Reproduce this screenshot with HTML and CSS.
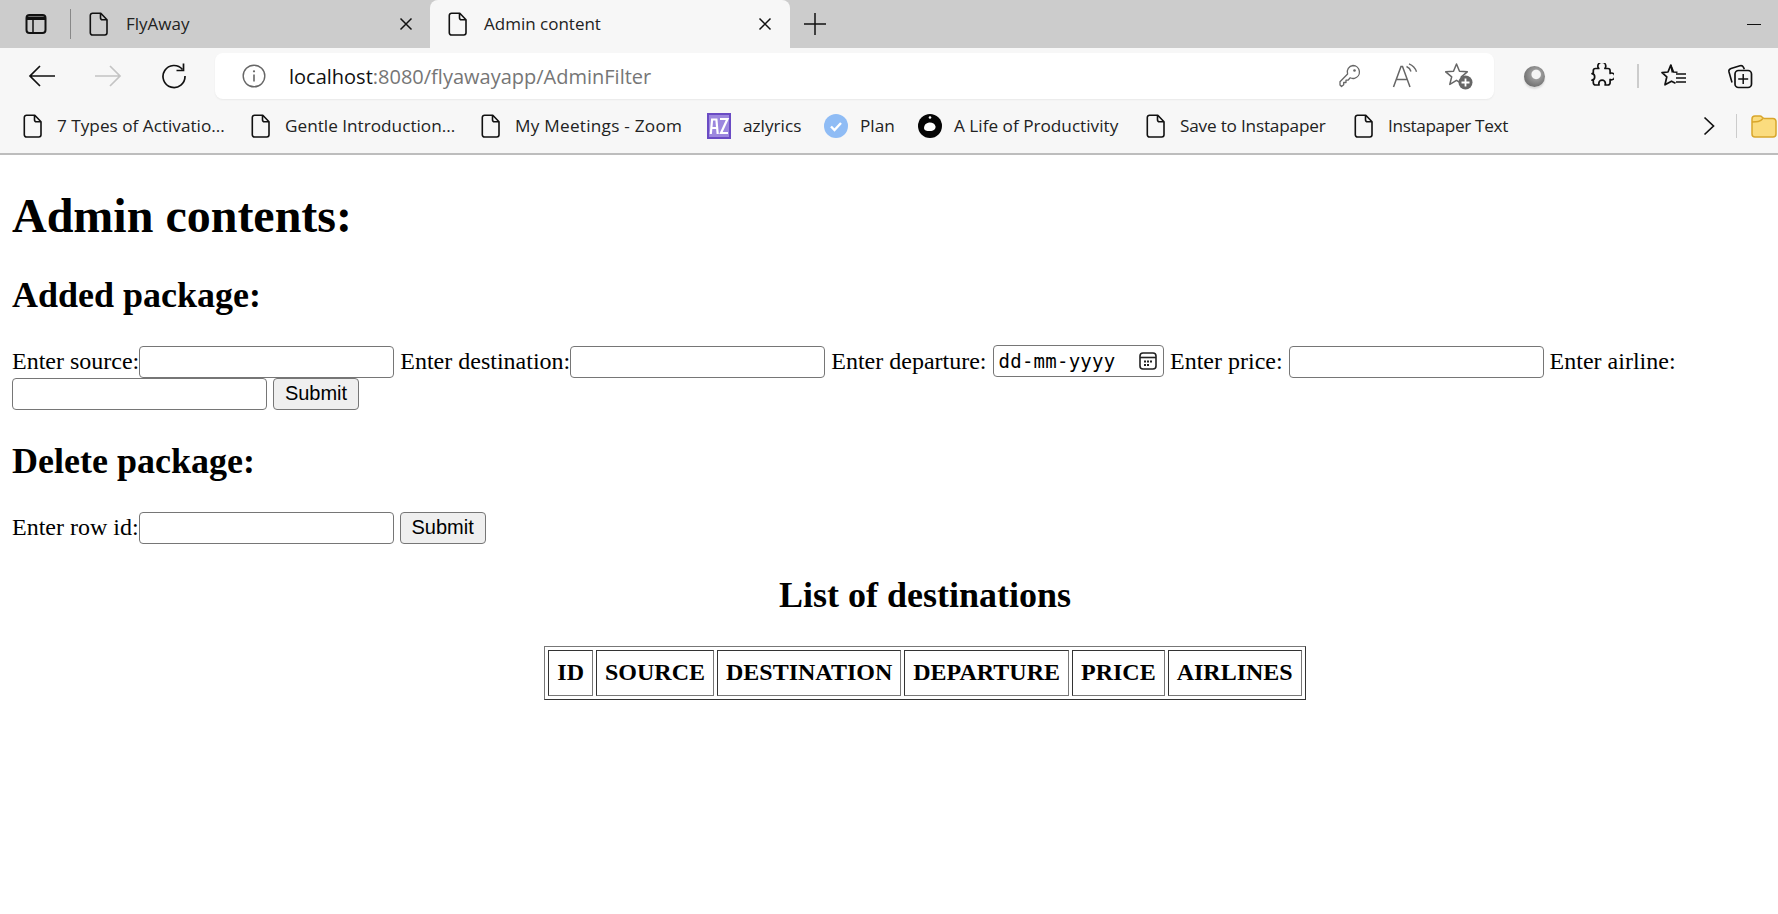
FILE: index.html
```html
<!DOCTYPE html>
<html lang="en">
<head>
<meta charset="utf-8">
<title>Admin content</title>
<link rel="stylesheet" href="styles.css">
</head>
<body>
<svg width="0" height="0" class="defs">
  <symbol id="doc" viewBox="0 0 20 24"><path d="M3.500 1.200h8.300l6.200 6.600v13a2.200 2.200 0 0 1-2.200 2.200H3.500a2.200 2.200 0 0 1-2.200-2.200V3.400a2.200 2.200 0 0 1 2.200-2.200zM11.500 1.500v4.300a2 2 0 0 0 2 2h4.300" fill="none" stroke="#111" stroke-width="1.600" stroke-linejoin="round"/></symbol>
</svg>
<header class="chrome">
  <div class="tabstrip">
    <span class="tool-sidebar"><svg width="22" height="22" viewBox="0 0 22 22"><rect x="1.500" y="2" width="19" height="18" rx="3" fill="none" stroke="#111" stroke-width="2"/><path d="M2 3.500h18v3.500H2z" fill="#111"/><path d="M8 7v12" stroke="#111" stroke-width="1.500"/></svg></span>
    <span class="tab-sep"></span>
    <div class="tab tab-bg">
      <svg class="doc" width="20" height="24"><use href="#doc"/></svg>
      <span class="tab-title">FlyAway</span>
      <svg class="close" width="14" height="14" viewBox="0 0 14 14"><path d="M1.500 1.500l11 11M12.500 1.500l-11 11" stroke="#111" stroke-width="1.500"/></svg>
    </div>
    <div class="tab tab-active">
      <svg class="doc" width="20" height="24"><use href="#doc"/></svg>
      <span class="tab-title">Admin content</span>
      <svg class="close" width="14" height="14" viewBox="0 0 14 14"><path d="M1.500 1.500l11 11M12.500 1.500l-11 11" stroke="#111" stroke-width="1.500"/></svg>
    </div>
    <svg class="newtab" width="22" height="22" viewBox="0 0 22 22"><path d="M11 0v22M0 11h22" stroke="#111" stroke-width="1.500"/></svg>
    <span class="minimize"></span>
  </div>
  <div class="toolbar">
    <svg class="nav nav-back" width="28" height="24" viewBox="0 0 28 24"><path d="M27 12H2M12 2L2 12l10 10" fill="none" stroke="#111" stroke-width="1.700"/></svg>
    <svg class="nav nav-fwd" width="28" height="24" viewBox="0 0 28 24"><path d="M1 12h25M16 2l10 10-10 10" fill="none" stroke="#c4c4c4" stroke-width="1.700"/></svg>
    <svg class="nav nav-reload" width="26" height="26" viewBox="0 0 26 26"><path d="M21.500 6.500A11 11 0 1 0 24 13" fill="none" stroke="#111" stroke-width="1.700"/><path d="M22.500 0.500v7h-7" fill="none" stroke="#111" stroke-width="1.700"/></svg>
    <div class="address">
      <svg class="info" width="24" height="24" viewBox="0 0 24 24"><circle cx="12" cy="12" r="10.800" fill="none" stroke="#666" stroke-width="1.400"/><path d="M12 10.500v7" stroke="#666" stroke-width="1.600"/><circle cx="12" cy="7.300" r="1.100" fill="#666"/></svg>
      <span class="url"><span class="url-host">localhost</span>:8080/flyawayapp/AdminFilter</span>
      <svg class="addr-ico addr-key" width="22" height="24" viewBox="0 0 22 24"><path d="M14 1.500a6.500 6.500 0 0 1 1.500 12.800c-1.600.4-3 .2-4.300-.5L9 16.200H7v2.300H4.700v2.200L2.500 22.500 1 21v-3.300l7.600-7.700A6.500 6.500 0 0 1 14 1.500z" fill="none" stroke="#666" stroke-width="1.300" stroke-linejoin="round"/><circle cx="15.500" cy="6.500" r="1.300" fill="#666"/></svg>
      <svg class="addr-ico addr-read" width="26" height="26" viewBox="0 0 26 26"><path d="M1.500 24L9 3.500h1.500L18 24M4.500 16.500h10.500" fill="none" stroke="#666" stroke-width="1.500"/><path d="M14.500 3.500a8 8 0 0 1 4.500 5M17 0.800a12.500 12.500 0 0 1 7.500 8" fill="none" stroke="#666" stroke-width="1.400"/></svg>
      <svg class="addr-ico addr-star" width="28" height="28" viewBox="0 0 28 28"><path d="M11.500 2l3 7.200 7.800.6-6 5 1.900 7.600-6.700-4.100-6.700 4.100 1.900-7.600-6-5 7.800-.6z" fill="none" stroke="#666" stroke-width="1.500" stroke-linejoin="round"/><circle cx="20.500" cy="20.500" r="7" fill="#666"/><path d="M20.500 16.500v8M16.500 20.500h8" stroke="#fff" stroke-width="1.800"/></svg>
    </div>
    <span class="ball"></span>
    <svg class="tool tool-ext" width="24" height="26" viewBox="0 0 24 26"><path d="M8.800 5.500C8 4.600 7.800 3.900 7.800 3.200a4 4 0 0 1 8 0c0 .7-.3 1.400-.9 2.300h3a2.200 2.200 0 0 1 2.200 2.200v2.700c.6-.3 1-.4 1.400-.4a3.400 3.400 0 0 1 0 6.800c-.4 0-.8-.1-1.400-.4v3.400a2.200 2.200 0 0 1-2.200 2.200h-2.800c.2-.6.300-1.100.3-1.500a3.300 3.300 0 0 0-6.600 0c0 .4.100.9.300 1.500H5.500a2.200 2.200 0 0 1-2.200-2.200v-3c-.5.300-1 .4-1.300.4H2c1.700-.3 2.700-1.600 2.700-3.200S3.700 11 2 10.700h0c.3 0 .8.100 1.300.4V7.700a2.200 2.200 0 0 1 2.200-2.200z" fill="none" stroke="#111" stroke-width="1.700" stroke-linejoin="round"/></svg>
    <span class="tool-sep"></span>
    <svg class="tool tool-fav" width="26" height="26" viewBox="0 0 26 26"><path d="M11.500 9.500L9.800 2 7 9 1 9.600l4.800 4.200-1.800 8 6.500-3.600 4 2" fill="none" stroke="#111" stroke-width="1.700" stroke-linejoin="round"/><path d="M9.800 2l2.800 7 3.900.3M15 11h10M15 15h10M15 19h10" fill="none" stroke="#111" stroke-width="1.500"/></svg>
    <svg class="tool tool-coll" width="26" height="26" viewBox="0 0 26 26"><path d="M5 19.500l-3-10.500a3 3 0 0 1 2-3.600l9-2.600a3 3 0 0 1 3.500 1.500l.8 2" fill="none" stroke="#111" stroke-width="1.600"/><rect x="8" y="7.500" width="16.500" height="17" rx="3.500" fill="#f7f7f7" stroke="#111" stroke-width="1.700"/><path d="M16.200 11v10M11.200 16h10" stroke="#111" stroke-width="1.500"/></svg>
  </div>
  <nav class="bookmarks">
    <a class="bm"><svg class="doc" width="20" height="24"><use href="#doc"/></svg><span>7 Types of Activatio...</span></a>
    <a class="bm"><svg class="doc" width="20" height="24"><use href="#doc"/></svg><span>Gentle Introduction...</span></a>
    <a class="bm bm-wide"><svg class="doc" width="20" height="24"><use href="#doc"/></svg><span>My Meetings - Zoom</span></a>
    <a class="bm"><svg class="fav" width="24" height="26" viewBox="0 0 24 26"><rect width="24" height="26" fill="#6a4bc4"/><rect x="2" y="2" width="20" height="22" fill="#9c87de"/><path d="M3.800 21l1.300-14.500h4.300L10.700 21M4.500 15h5.500" fill="none" stroke="#fff" stroke-width="2.200"/><path d="M13 6h7.500l-6.500 14h7" fill="none" stroke="#fff" stroke-width="2.200"/></svg><span>azlyrics</span></a>
    <a class="bm"><svg class="fav" width="24" height="26" viewBox="0 0 24 26"><circle cx="12" cy="13" r="12" fill="#8fbcf5"/><path d="M7 13.500l3.500 3.500 6.500-7" fill="none" stroke="#fff" stroke-width="2.400"/></svg><span>Plan</span></a>
    <a class="bm"><svg class="fav" width="24" height="26" viewBox="0 0 24 26"><circle cx="12" cy="13" r="12" fill="#050505"/><path d="M6 15c0-3 2-5 5-5.500 3-.4 6 1 6.500 4 .4 2.500-2 4.500-5.500 4.500S6 17.500 6 15z" fill="#fff"/><circle cx="12" cy="4.500" r="1.300" fill="#fff"/></svg><span>A Life of Productivity</span></a>
    <a class="bm bm-tight"><svg class="doc" width="20" height="24"><use href="#doc"/></svg><span>Save to Instapaper</span></a>
    <a class="bm bm-tighter"><svg class="doc" width="20" height="24"><use href="#doc"/></svg><span>Instapaper Text</span></a>
    <svg class="chev" width="12" height="20" viewBox="0 0 12 20"><path d="M1.500 1.500l9 8.500-9 8.500" fill="none" stroke="#111" stroke-width="1.700"/></svg>
    <span class="bm-sep"></span>
    <svg class="folder" width="26" height="24" viewBox="0 0 26 24"><path d="M1 5a3 3 0 0 1 3-3h5c2 0 2.500 2.500 4.500 2.500H22a3 3 0 0 1 3 3V20a3 3 0 0 1-3 3H4a3 3 0 0 1-3-3z" fill="#fbdc7e" stroke="#d9a62b" stroke-width="1.500"/><path d="M1 8c5 0 8 0 11-3.500" fill="none" stroke="#d9a62b" stroke-width="1.500"/></svg>
  </nav>
</header>
<main class="page">
  <h1>Admin contents:</h1>
  <h2>Added package:</h2>
  <form class="form form-add">Enter source:<input type="text"> Enter destination:<input type="text"> Enter departure: <span class="date"><span class="date-text">dd-mm-yyyy</span><svg class="date-ico" width="18" height="18" viewBox="0 0 18 18"><rect x="1" y="1" width="16" height="16" rx="3" fill="none" stroke="#222" stroke-width="1.600"/><path d="M1 5.500h16" stroke="#222" stroke-width="1.600"/><path d="M5 8.500h2v2H5zM8 8.500h2v2H8zM11 8.500h2v2h-2zM5 12h2v2H5zM8 12h2v2H8z" fill="#222"/></svg></span> Enter price: <input type="text"> Enter airline: <input type="text"> <input type="submit" value="Submit"></form>
  <h2>Delete package:</h2>
  <form class="form">Enter row id:<input type="text"> <input type="submit" value="Submit"></form>
  <div class="center">
    <h2>List of destinations</h2>
    <table>
      <tr><th>ID</th><th>SOURCE</th><th>DESTINATION</th><th>DEPARTURE</th><th>PRICE</th><th>AIRLINES</th></tr>
    </table>
  </div>
</main>
</body>
</html>
```
FILE: styles.css
```css
html, body { margin: 0; padding: 0; height: 100%; overflow: hidden; background: #fff; }
body { font-family: "Liberation Serif", serif; color: #000; }
.defs { position: absolute; }

.chrome { font-family: "Open Sans", "Noto Sans", sans-serif; font-size: 17px; color: #222; width: 1778px; }

.tabstrip { height: 48px; background: #ccc; display: flex; align-items: center; }
.tool-sidebar { margin-left: 25px; width: 22px; height: 22px; }
.tab-sep { width: 1px; height: 30px; background: #888; margin-left: 23px; }
.tab { display: flex; align-items: center; height: 48px; box-sizing: border-box; }
.tab .doc { flex: none; }
.tab-title { flex: 1; margin-left: 17px; padding-bottom: 2px; }
.tab-bg { width: 359px; padding: 0 17px 0 18px; }
.tab-active { width: 360px; padding: 0 18px 0 18px; background: #f7f7f7; border-radius: 8px 8px 0 0; }
.tab-active .tab-title { margin-left: 16px; }
.newtab { margin-left: 14px; }
.minimize { width: 14px; height: 1px; background: #111; margin-left: 921px; }

.toolbar { height: 52px; background: #f7f7f7; display: flex; align-items: center; padding-top: 4px; box-sizing: border-box; }
.nav-back { margin-left: 28px; }
.nav-fwd { margin-left: 38px; }
.nav-reload { margin-left: 39px; }
.address { width: 1279px; height: 46px; margin-left: 28px; background: #fff; border-radius: 8px; display: flex; align-items: center; box-shadow: 0 1px 2px rgba(0,0,0,.06); }
.info { margin-left: 27px; }
.url { margin-left: 23px; font-size: 20px; color: #767676; flex: 1; }
.url-host { color: #111; }
.addr-ico { flex: none; }
.addr-read { margin-left: 31px; }
.addr-star { margin-left: 27px; margin-right: 21px; }
.ball { width: 21px; height: 21px; border-radius: 50%; margin-left: 30px; background: radial-gradient(circle at 58% 40%, #f4f4f4 0 24%, #9a9a9a 30%, #7c7c7c 60%, #5a5a5a 100%); box-shadow: 0 2px 2px rgba(0,0,0,.12); }
.tool-ext { margin-left: 45px; }
.tool-sep { width: 2px; height: 24px; background: #ccc; margin-left: 23px; }
.tool-fav { margin-left: 22px; }
.tool-coll { margin-left: 40px; }

.bookmarks { height: 55px; padding-bottom: 2px; background: #f7f7f7; border-bottom: 2px solid #bdbdbd; box-sizing: border-box; display: grid; align-items: center; padding-left: 23px; grid-template-columns: 228px 230px 226px 117px 94px 228px 208px 349px 33px 2px 1fr; }
.bm { display: flex; align-items: center; gap: 14px; white-space: nowrap; font-size: 17.2px; }
.bm .fav { flex: none; margin-right: -2px; }
.bm-wide { letter-spacing: .25px; }
.bm-tight { letter-spacing: -.2px; }
.bm-tighter { letter-spacing: -.35px; }
.bm-sep { width: 1px; height: 24px; background: #ccc; }
.folder { margin-left: 13px; }

.page { width: 1826px; padding: 0 12px; font-size: 24px; line-height: normal; }
h1 { font-size: 48px; margin: 33px 0 32px; line-height: 55px; }
h2 { font-size: 36px; margin: 30px 0; line-height: 41px; }
.form { margin: 0 0 1px; }
input { font-size: 20px; font-family: "Liberation Sans", Arial, sans-serif; box-sizing: border-box; height: 32px; margin: 0; vertical-align: baseline; }
.form-add input, .form-add .date { transform: translateY(-1px); }
input[type=text] { width: 255px; border: 1.5px solid #767676; border-radius: 4px; background: #fff; padding: 2px 3px; }
input[type=submit] { width: 86px; border: 1.5px solid #767676; border-radius: 4px; background: #efefef; color: #000; padding: 0; }
.date { display: inline-flex; align-items: center; justify-content: space-between; box-sizing: border-box; width: 171.5px; height: 32px; padding: 0 5px; border: 1px solid #767676; border-radius: 4px; font-family: "DejaVu Sans Mono", "Liberation Mono", monospace; font-size: 19px; letter-spacing: .25px; line-height: 28px; }
.date-ico { flex: none; margin-right: 1px; }
.center { text-align: center; }
.center h2 { margin: 31px 0 30px; }
table { margin: 0 auto; border: 1px solid; border-color: #777 #333 #333 #777; border-collapse: separate; border-spacing: 3px; font-size: 24px; }
th { border: 1px solid; border-color: #333 #777 #777 #333; padding: 8px 8px 9px; font-weight: bold; }
```
